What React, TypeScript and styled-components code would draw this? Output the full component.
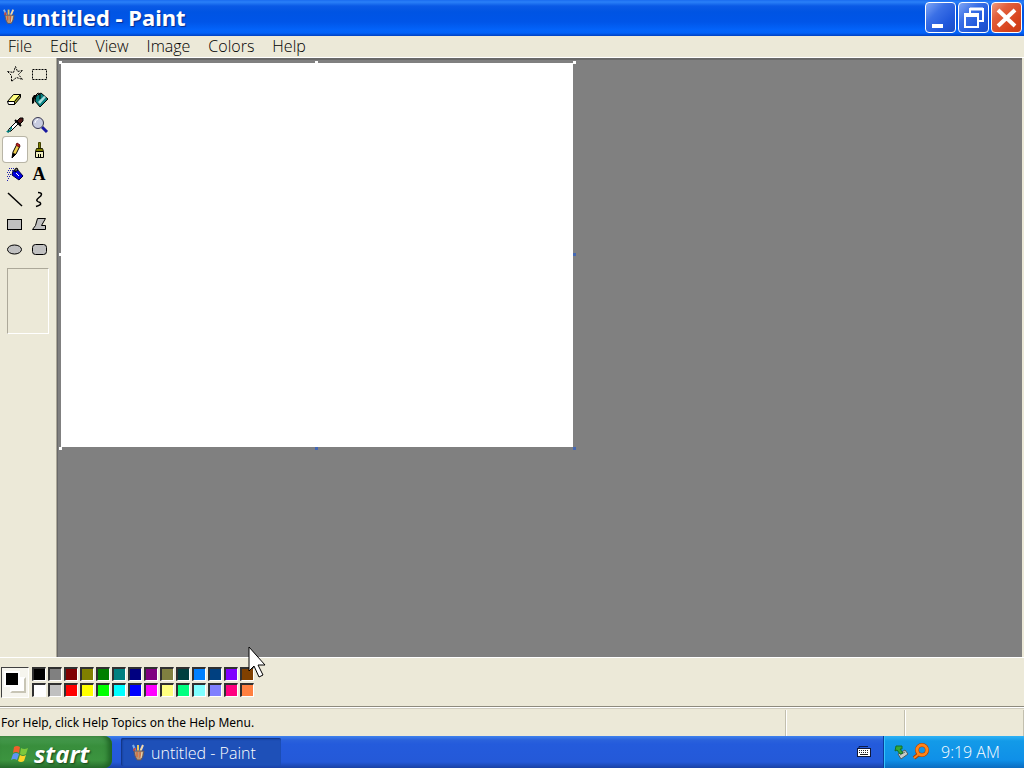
import React from "react";
import styled, { createGlobalStyle, css } from "styled-components";

const Global = createGlobalStyle`
  *, *::before, *::after { box-sizing: border-box; }
  body { margin: 0; background: #ece9d8; overflow: hidden; }
  button { font: inherit; color: inherit; }
`;

const Screen = styled.div`
  display: flex;
  flex-direction: column;
  height: 100vh;
  font-family: "Open Sans", sans-serif;
  color: #000;
  background: #ece9d8;
  cursor: default;
`;

const TitleBar = styled.header`
  display: flex;
  align-items: center;
  height: 36px;
  padding: 0 2px 2px 3px;
  background: linear-gradient(#1a6cf0 0, #2a80f8 2px, #0a5ae6 6px, #0054e3 12px, #0055e8 22px, #0364fb 30px, #0262f8 33px, #0040c0 36px);
`;

const Title = styled.h1`
  flex: 1;
  margin: 0 0 0 6px;
  font: bold 22px/34px "Noto Sans", sans-serif;
  color: #fff;
  text-shadow: 1px 1px 1px #0a2a8c;
`;

const CaptionButtons = styled.div`
  display: flex;
  gap: 2px;
`;

const CaptionButton = styled.button<{ $danger?: boolean }>`
  width: 31px;
  height: 31px;
  padding: 0;
  border: 1px solid #fff;
  border-radius: 4px;
  background: ${(p) =>
    p.$danger
      ? "linear-gradient(135deg, #f09a80 0, #e2603c 30%, #d8441e 70%, #c83c18 100%)"
      : "linear-gradient(135deg, #7fa6f5 0, #3b70e6 35%, #2058dc 70%, #1b4cc4 100%)"};
  svg { display: block; }
`;

const MenuBar = styled.nav`
  display: flex;
  align-items: flex-start;
  height: 22px;
  padding-left: 8px;
  gap: 18px;
  border-bottom: 1px solid #fff;
`;

const MenuItem = styled.button`
  padding: 0;
  border: 0;
  background: none;
  font-size: 16px;
  font-weight: 300;
  line-height: 20px;
`;

const Workspace = styled.main`
  display: flex;
  flex: 1;
  min-height: 0;
`;

const ToolBox = styled.aside`
  flex: none;
  width: 57px;
  padding: 4px 0 0 3px;
  border-right: 1px solid #aca899;
`;

const ToolGrid = styled.div`
  display: grid;
  grid-template-columns: 24px 24px;
  grid-auto-rows: 25px;
`;

const ToolButton = styled.button<{ $selected?: boolean }>`
  padding: 0;
  border: 0;
  border-radius: 3px;
  background: none;
  ${(p) =>
    p.$selected &&
    css`
      background: #fff;
      box-shadow: 0 0 0 1px #b8b5a6;
    `}
  svg { display: block; }
`;

const ToolOptions = styled.div`
  width: 42px;
  height: 66px;
  margin: 6px 0 0 4px;
  border: 1px solid;
  border-color: #aca899 #fff #fff #aca899;
`;

const Desk = styled.section`
  flex: 1;
  min-width: 0;
  margin-right: 2px;
  padding: 3px 0 0 3px;
  border: 1px solid #696969;
  border-top-width: 2px;
  border-right: 0;
  border-bottom: 0;
  background: #808080;
`;

const Sheet = styled.div`
  position: relative;
  width: 512px;
  height: 384px;
  background: #fff;
`;

const Handle = styled.i<{ $x: number; $y: number; $active?: boolean }>`
  position: absolute;
  left: ${(p) => p.$x}%;
  top: ${(p) => p.$y}%;
  width: 3px;
  height: 3px;
  margin: -2px 0 0 -2px;
  ${(p) => p.$x === 100 && "margin-left: 0;"}
  ${(p) => p.$y === 100 && "margin-top: 0;"}
  background: ${(p) => (p.$active ? "#4468b4" : "#fff")};
`;

const ColorBox = styled.section`
  display: flex;
  height: 49px;
  padding: 9px 0 0 1px;
  gap: 3px;
  border-top: 1px solid #fff;
`;

const CurrentColors = styled.div`
  position: relative;
  width: 28px;
  height: 31px;
  border: 1px solid;
  border-color: #404040 #fff #fff #404040;
  background: #f6f5ee;
`;

const Chip = styled.span<{ $front?: boolean }>`
  position: absolute;
  width: 16px;
  height: 16px;
  left: ${(p) => (p.$front ? 2 : 8)}px;
  top: ${(p) => (p.$front ? 3 : 9)}px;
  border: 2px solid #fff;
  border-color: ${(p) => (p.$front ? "#fff" : "#fff #c8c5b6 #c8c5b6 #fff")};
  background: ${(p) => (p.$front ? "#000" : "#fff")};
`;

const Palette = styled.div`
  display: grid;
  grid-template-columns: repeat(14, 14px);
  grid-auto-rows: 14px;
  gap: 2px;
`;

const Swatch = styled.button<{ $color: string }>`
  padding: 0;
  border: 1px solid;
  border-width: 2px 1px 1px 2px;
  border-color: #303030 #fff #fff #303030;
  background: ${(p) => p.$color};
`;

const StatusBar = styled.footer`
  display: flex;
  height: 30px;
  padding-top: 3px;
  border-top: 1px solid #8d8a7d;
  box-shadow: inset 0 1px #fff, inset 0 2px #d0cdbf;
  font-family: "Noto Sans", sans-serif;
  font-size: 12px;
  line-height: 26px;
`;

const StatusCell = styled.div<{ $wide?: boolean }>`
  flex: ${(p) => (p.$wide ? "1" : "0 0 119px")};
  padding-left: 1px;
  border-right: 1px solid #c2bfae;
  box-shadow: 1px 0 #fff;
`;

const TaskBar = styled.footer`
  display: flex;
  height: 32px;
  color: #fff;
  background: linear-gradient(#3f82ee 0, #2a62dc 4px, #245bdc 8px, #2459d8 26px, #1941a5 32px);
`;

const StartButton = styled.button`
  display: flex;
  align-items: center;
  gap: 5px;
  width: 112px;
  padding: 4px 0 0 11px;
  border: 0;
  border-radius: 0 8px 8px 0;
  background: linear-gradient(#5aa55a 0, #43974a 4px, #388e3c 10px, #3c943f 24px, #2a7030 32px);
  box-shadow: inset -4px 0 5px #1f6425;
  font: italic bold 24px/28px "Open Sans", sans-serif;
  text-shadow: 1px 1px 2px #143f18;
`;

const TaskButton = styled.button`
  display: flex;
  align-items: center;
  gap: 5px;
  width: 160px;
  height: 28px;
  margin: 2px 0 0 9px;
  padding: 2px 0 0 11px;
  border: 0;
  border-radius: 2px;
  background: #1e50b8;
  box-shadow: inset 1px 1px 2px #102f7a;
  font-size: 16px;
  font-weight: 300;
`;

const Language = styled.div`
  display: flex;
  align-items: center;
  margin-left: auto;
  padding-right: 12px;
`;

const Tray = styled.div`
  display: flex;
  align-items: center;
  width: 141px;
  padding-left: 10px;
  gap: 3px;
  border-left: 1px solid #0a3c9c;
  background: linear-gradient(#2fb2f5 0, #139ae8 5px, #0f90e8 24px, #0b6cc0 32px);
  box-shadow: inset 1px 0 #36c4fb;
`;

const Clock = styled.time`
  margin-left: 9px;
  font-size: 16px;
  font-weight: 300;
`;

const Pointer = styled.svg`
  position: absolute;
  left: 248px;
  top: 646px;
  pointer-events: none;
`;

const BrushCup = ({ size = 14 }: { size?: number }) => (
  <svg width={size} height="20" viewBox="0 0 14 20" aria-hidden="true">
    <path d="M4 9 1 2" stroke="#7fb0e8" strokeWidth="2" />
    <path d="M6 9V2" stroke="#e8c860" strokeWidth="2" />
    <path d="m8 9 3-7" stroke="#f0d8b0" strokeWidth="2" />
    <path d="m2 8 1-3" stroke="#d04838" strokeWidth="2" />
    <path d="M2 8h10l-1 5-2 4H5l-2-4z" fill="#b99776" stroke="#5c5560" />
    <path d="M5 9v5M8 9v6" stroke="#e05a28" />
    <path d="m10 9-1 6" stroke="#e8ddb5" />
  </svg>
);

const tools: { name: string; art: React.ReactNode }[] = [
  {
    name: "Free-form select",
    art: <path d="m4.500 9.500 6 1 2-6 2 5 5-1-4 4 4 5-6-2-5 4v-6z" fill="none" stroke="#000" strokeDasharray="2 1" />,
  },
  {
    name: "Select",
    art: <rect x="5.500" y="7.500" width="14" height="10" fill="none" stroke="#000" strokeDasharray="2 1" />,
  },
  {
    name: "Eraser",
    art: (
      <g stroke="#000" strokeLinejoin="round">
        <path d="M10.500 7.500h7l-6 7h-7z" fill="#ffff80" />
        <path d="M4.500 14.500h7v3h-6z" fill="#fff" />
        <path d="m11.500 14.500 6-7v3l-6 7z" fill="#a8a82c" />
      </g>
    ),
  },
  {
    name: "Fill with color",
    art: (
      <>
        <path d="m9 9 5-3 7 6-8 8-5-6z" fill="#078080" stroke="#000" />
        <path d="m11 15 6-6 2 1-6 7z" fill="#a8dede" />
        <path d="M13 12V7l-2-1-2 2" fill="none" stroke="#000" />
        <path d="M10 8H7l-2 3v6l2-1 1-5z" fill="#000" />
      </>
    ),
  },
  {
    name: "Pick color",
    art: (
      <>
        <path d="m6 17 8-8 2 2-8 8-3 1z" fill="#fff" stroke="#000" />
        <path d="m9 16-3 4H4v-1h3l1-4z" fill="#008080" stroke="#008080" />
        <path d="m12 8 6 6" stroke="#000" strokeWidth="2" />
        <path d="m14 9 3-3h3v3l-3 3z" fill="#501818" stroke="#000" />
      </>
    ),
  },
  {
    name: "Magnifier",
    art: (
      <>
        <path d="m15 15 5 5" stroke="#1818a0" strokeWidth="3" />
        <circle cx="11" cy="11" r="5.500" fill="#c8cce0" stroke="#383850" />
        <path d="M8 11q0-3 3-4" fill="none" stroke="#fff" />
      </>
    ),
  },
  {
    name: "Pencil",
    art: (
      <>
        <path d="m10 15 4-8 3 2-4 8-4 4z" fill="#f0d050" stroke="#000" />
        <path d="m14 6 3 2-1 2-3-2z" fill="#c02020" stroke="#701010" />
        <path d="m9 21 1-5 3 1z" fill="#000" />
      </>
    ),
  },
  {
    name: "Brush",
    art: (
      <>
        <path d="M11.500 5.500h2v6h-2z" fill="#808000" stroke="#404000" />
        <path d="M9.500 11.500h6l1 3h-8z" fill="#808000" stroke="#202000" />
        <path d="M8.500 14.500h8v6h-8z" fill="#f0eebf" stroke="#000" />
        <path d="M11.500 17v3M13.500 17v3" stroke="#000" />
      </>
    ),
  },
  {
    name: "Airbrush",
    art: (
      <>
        <path d="M6 6.500h6M5 8.500h5M4 10.500h4M5 12.500h3M4 14.500h3M5 16.500h1M4 18.500h1" stroke="#2020b0" strokeDasharray="1 1" />
        <path d="m10 9 4-2 6 7-4 4-7-5z" fill="#0000e0" stroke="#000040" />
        <path d="m12 7 2-1 1 2-3 2z" fill="#808080" stroke="#000" />
        <path d="m13 11 3 3" stroke="#fff" />
      </>
    ),
  },
  {
    name: "Text",
    art: (
      <text x="12" y="18" textAnchor="middle" fontFamily="Liberation Serif, serif" fontWeight="bold" fontSize="18">
        A
      </text>
    ),
  },
  { name: "Line", art: <path d="m5 6 14 13" stroke="#000" strokeWidth="1.500" /> },
  {
    name: "Curve",
    art: <path d="M11 5.500c5 0 4 3 1 5-4 3-2 4 1 5 2 2-1 3-4 4" fill="none" stroke="#000" strokeWidth="1.500" />,
  },
  { name: "Rectangle", art: <rect x="4.500" y="7.500" width="14" height="10" fill="#c0c0c0" stroke="#000" /> },
  {
    name: "Polygon",
    art: <path d="M10.500 6.500h8l-4 7h4v4h-13l3-4z" fill="#c0c0c0" stroke="#000" />,
  },
  { name: "Ellipse", art: <ellipse cx="11.500" cy="12.500" rx="7" ry="4.500" fill="#c0c0c0" stroke="#000" /> },
  {
    name: "Rounded rectangle",
    art: <rect x="5.500" y="7.500" width="14" height="10" rx="3" fill="#c0c0c0" stroke="#000" />,
  },
];

const colors = [
  "#000000", "#808080", "#800000", "#808000", "#008000", "#008080", "#000080",
  "#800080", "#808040", "#004040", "#0080ff", "#004080", "#8000ff", "#804000",
  "#ffffff", "#c0c0c0", "#ff0000", "#ffff00", "#00ff00", "#00ffff", "#0000ff",
  "#ff00ff", "#ffff80", "#00ff80", "#80ffff", "#8080ff", "#ff0080", "#ff8040",
];

const handles = [
  { x: 0, y: 0 }, { x: 50, y: 0 }, { x: 100, y: 0 }, { x: 0, y: 50 }, { x: 0, y: 100 },
  { x: 100, y: 50, active: true }, { x: 50, y: 100, active: true }, { x: 100, y: 100, active: true },
];

export default function App() {
  return (
    <Screen>
      <Global />
      <TitleBar>
        <BrushCup size={13} />
        <Title>untitled - Paint</Title>
        <CaptionButtons>
          <CaptionButton aria-label="Minimize">
            <svg width="29" height="29"><path d="M6 21h11v4H6z" fill="#fff" /></svg>
          </CaptionButton>
          <CaptionButton aria-label="Restore">
            <svg width="29" height="29" fill="none" stroke="#fff">
              <path d="M11 10V6h13v12h-4" strokeWidth="2" />
              <path d="M11 6h13" strokeWidth="3" />
              <path d="M6 12h13v12H6z" strokeWidth="2" />
              <path d="M5 12h15" strokeWidth="4" />
            </svg>
          </CaptionButton>
          <CaptionButton aria-label="Close" $danger>
            <svg width="29" height="29"><path d="m6 7 17 16M23 7 6 23" stroke="#fff" strokeWidth="4" /></svg>
          </CaptionButton>
        </CaptionButtons>
      </TitleBar>
      <MenuBar>
        {["File", "Edit", "View", "Image", "Colors", "Help"].map((m) => (
          <MenuItem key={m}>{m}</MenuItem>
        ))}
      </MenuBar>
      <Workspace>
        <ToolBox>
          <ToolGrid>
            {tools.map((t) => (
              <ToolButton key={t.name} aria-label={t.name} $selected={t.name === "Pencil"}>
                <svg width="24" height="25" viewBox="0 0 24 25">{t.art}</svg>
              </ToolButton>
            ))}
          </ToolGrid>
          <ToolOptions />
        </ToolBox>
        <Desk>
          <Sheet>
            {handles.map((h) => (
              <Handle key={`${h.x}-${h.y}`} $x={h.x} $y={h.y} $active={h.active} />
            ))}
          </Sheet>
        </Desk>
      </Workspace>
      <ColorBox>
        <CurrentColors>
          <Chip />
          <Chip $front />
        </CurrentColors>
        <Palette>
          {colors.map((c) => (
            <Swatch key={c} $color={c} aria-label={c} />
          ))}
        </Palette>
      </ColorBox>
      <StatusBar>
        <StatusCell $wide>For Help, click Help Topics on the Help Menu.</StatusCell>
        <StatusCell />
        <StatusCell />
      </StatusBar>
      <TaskBar>
        <StartButton>
          <svg width="18" height="18" viewBox="0 0 18 18" aria-hidden="true">
            <path d="M3 2q3-2 6 0L8 8Q5 6 2 8z" fill="#f0602c" />
            <path d="M10 3q3 2 7 0l-2 6q-3 2-6 0z" fill="#7cc83c" />
            <path d="M2 9q3-2 6 0l-2 6q-3-2-6 0z" fill="#5c94f4" />
            <path d="M9 10q3 2 6 0l-2 6q-3 2-6 0z" fill="#fcd428" />
          </svg>
          start
        </StartButton>
        <TaskButton>
          <BrushCup />
          untitled - Paint
        </TaskButton>
        <Language>
          <svg width="14" height="14" viewBox="0 0 14 14" aria-label="Keyboard">
            <path d="M2 3.500V1.500h9" fill="none" stroke="#0c1c50" />
            <rect x="0.500" y="3.500" width="13" height="8" fill="#fff" stroke="#101838" />
            <path d="M2 5.500h10M2 7.500h10" stroke="#202020" strokeDasharray="1 1" />
            <path d="M3 9.500h8" stroke="#202020" />
          </svg>
        </Language>
        <Tray>
          <svg width="15" height="18" viewBox="0 0 15 18" aria-hidden="true">
            <path d="m4 11 7-4 3 4-7 5z" fill="#c8ccc8" stroke="#505c60" />
            <path d="m6 12 5-3" stroke="#607078" />
            <path d="M2 3h6v3H6l3 4-3 1-3-4-2 1z" fill="#35a936" stroke="#147028" />
          </svg>
          <svg width="17" height="18" viewBox="0 0 17 18" fill="none" aria-hidden="true">
            <circle cx="10" cy="7" r="5" stroke="#a83c00" strokeWidth="4" />
            <path d="m7 11-5 4" stroke="#a83c00" strokeWidth="4" />
            <circle cx="10" cy="7" r="5" stroke="#ff8418" strokeWidth="3" />
            <path d="m7 11-5 4" stroke="#ff8418" strokeWidth="2" />
          </svg>
          <Clock>9:19 AM</Clock>
        </Tray>
      </TaskBar>
      <Pointer width="20" height="32" viewBox="0 0 20 32" aria-hidden="true">
        <path d="M1 1v24l5-5 5 11 4-2-5-10h7z" fill="#fff" stroke="#000" />
      </Pointer>
    </Screen>
  );
}
